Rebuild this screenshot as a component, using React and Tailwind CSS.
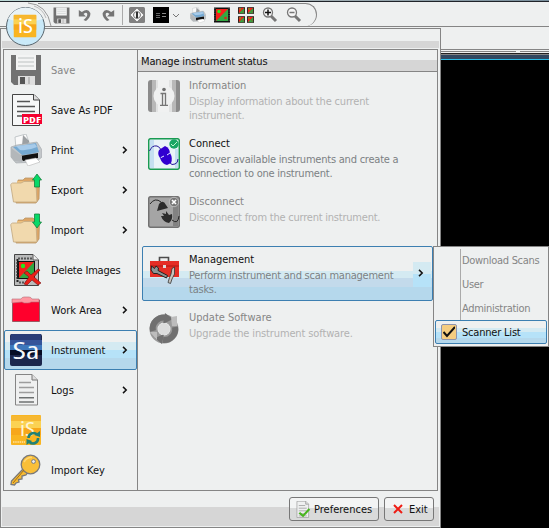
import React from "react";

const Svg = ({ size = 32, className = "", children }) => (
  <svg width={size} height={size} viewBox="0 0 32 32" className={"shrink-0 " + className} fill="none">{children}</svg>
);

const SaveIcon = ({ size, className }) => (
  <Svg size={size} className={className}>
    <path d="M1 1H31V31H4L1 28Z" fill="#727272" />
    <path d="M6 1H26V16H6Z" fill="#f3f4f4" />
    <path d="M8 4H24M8 8H24M8 12H24" stroke="#cfd2d2" strokeWidth="1.4" />
    <path d="M8 22H25V31H8Z" fill="#dedede" />
    <path d="M10 23H15V30H10Z" fill="#555" /><path d="M19 23V30" stroke="#bbb" strokeWidth="2" />
  </Svg>
);
const PdfIcon = () => (
  <Svg>
    <path d="M2.5 .5H24L29.5 6V31.5H2.5Z" fill="#f6f7f7" stroke="#444" />
    <path d="M23.5 .5V6H29.5" fill="#ddd" stroke="#444" />
    <path d="M7 7.5H20M7 12.5H25M7 17.5H25M7 22H12" stroke="#555" strokeWidth="1.5" />
    <path d="M12 20H32V30H12Z" fill="#f5002f" />
    <text x="13" y="28.5" fill="#fff" fontSize="9.6" fontWeight="bold" fontFamily="Open Sans, sans-serif" textLength="18" lengthAdjust="spacingAndGlyphs">PDF</text>
  </Svg>
);
const PrintIcon = ({ size, className }) => (
  <Svg size={size} className={className}>
    <path d="M5 3L16 0 20 11 6 15Z" fill="#fafafa" stroke="#aeb4b8" strokeWidth=".7" />
    <path d="M13 1L19 7 18 12 12 12Z" fill="#74797d" opacity=".7" />
    <path d="M1 13L7 11 27 8 32 16V23L26 28 6 29 1 23Z" fill="#c3c7ca" stroke="#9da2a6" strokeWidth=".6" />
    <path d="M3 13L26 9 29 18Q18 21 12 21Z" fill="#75a9d1" />
    <path d="M6 12L25 10 27 13Q18 17 10 16Z" fill="#a7cbea" />
    <path d="M10 22L28 19 28 24 13 27Z" fill="#111" />
    <path d="M15 26L26 24 30 28 18 32Z" fill="#fff" stroke="#aaa" strokeWidth=".5" />
    <path d="M1 14L12 22V28L4 27 1 23Z" fill="#b3b7ba" />
  </Svg>
);
const FolderIcon = ({ up }) => (
  <Svg className="overflow-visible">
    <path d="M8 9V6H13L15 4H23L25 6H29.5L29 25 26 29H6Z" fill="#dca566" stroke="#b99565" strokeWidth=".8" />
    <path d="M7 7H25V11H7Z" fill="#efc17d" />
    <path d="M.7 10.5Q2 8.5 4 9H11L14 7.5H24Q26 8 26 11L27 28H3.5Z" fill="#f1d9ad" stroke="#c6ad85" strokeWidth=".9" />
    <path d={up ? "M27 0L31.5 6H29.5V13H24.5V6H22.5Z" : "M24.5 0H29.5V8H31.5L27 14 22.5 8H24.5Z"} fill="#08d968" stroke="#16803c" strokeWidth=".8" />
  </Svg>
);
const Picture = () => (
  <>
    <path d="M0 1H32V31H0Z" fill="#111" />
    <path d="M4 4H28V28H4Z" fill="#f4201b" />
    <path d="M28 4V28H4Z" fill="#31a842" />
    <circle cx="10" cy="9" r="3.5" fill="#24e820" /><circle cx="23" cy="22" r="2.5" fill="#db221c" />
    <path d="M1.7 2V30M30.3 2V30" stroke="#aaa" strokeWidth="1.4" strokeDasharray="1.5 2" />
  </>
);
const PictureIcon = ({ size }) => <Svg size={size}><Picture /></Svg>;
const DeleteIcon = () => (
  <Svg>
    <path d="M4.5 .5H23L28.5 6V31.5H4.5Z" fill="#b9baba" stroke="#444" />
    <path d="M23 .5V6H28.5" fill="#eee" stroke="#555" />
    <path d="M7 7H25V25H7Z" fill="#111" /><path d="M9 8H24V24H9Z" fill="#f4201b" /><path d="M24 8V24H9Z" fill="#31a842" />
    <circle cx="13" cy="12" r="2.2" fill="#24e820" />
    <path d="M7.5 5V29" stroke="#222" strokeWidth="2" strokeDasharray="2 1" />
    <path d="M8 4.5H22M9 28.5H17" stroke="#555" strokeWidth="2" strokeDasharray="2 1" />
    <path d="M14 19L17 17 21 21 28 15 30 16 24 23 31 29 28 31 22 26 17 31 14 30 19 23Z" fill="#eb2019" stroke="#781313" strokeWidth=".6" />
  </Svg>
);
const WorkIcon = () => (
  <Svg>
    <path d="M2.5 6H29.5V27.5H2.5Z" fill="#ff002c" stroke="#9c5960" />
    <path d="M2 9V5H11Q12 3 14 3H19Q21 3 22 5H29V8H21Q20 9 18 9H14L12 8Z" fill="#ff98a1" stroke="#b66c75" strokeWidth=".6" />
  </Svg>
);
const InstrumentIcon = () => (
  <Svg>
    <rect width="32" height="32" rx="2" fill="#1c274d" /><path d="M1 0H31V6H0Z" fill="#293d78" />
    <path d="M0 6H32V11H0Z" fill="#35559a" /><path d="M0 11H32V16H0Z" fill="#3d78bc" /><path d="M0 16H32V21H0Z" fill="#060d25" />
    <text x="2.5" y="24.5" fill="#f6f8fb" fontSize="23" fontFamily="Open Sans, sans-serif" textLength="27" lengthAdjust="spacingAndGlyphs">Sa</text>
  </Svg>
);
const LogsIcon = ({ check, size }) => (
  <Svg size={size}>
    <path d="M5.5 .5H22L27.5 6V31H5.5Z" fill="#eff0f0" stroke="#858585" />
    <path d="M22 .5V6H27.5" fill="#ddd" stroke="#777" />
    <path d="M9 8.5H21M9 13.5H24M9 18.5H24M9 24H24M9 28H24" stroke="#9d9d9d" strokeWidth="1.5" />
    {!check && <path d="M9 23.5H24M9 28H24" stroke="#6c7070" />}
    {check && <path d="M10 22L17 28 29 15" stroke="#48b51f" strokeWidth="4" />}
  </Svg>
);
const GoldTile = () => (
  <>
    <rect x="1" y="1" width="30" height="30" rx="1" fill="#f9b521" />
    <path d="M1 2H31V7H1Z" fill="#f6b832" /><path d="M1 7H31V14H1Z" fill="#fbd253" /><path d="M1 14H31V21H1Z" fill="#f7a71b" />
  </>
);
const UpdateIcon = () => (
  <Svg>
    <GoldTile />
    <text x="10" y="22" fill="#fff5d3" fontSize="20" fontFamily="Open Sans, sans-serif" textLength="15" lengthAdjust="spacingAndGlyphs">iS</text>
    <path d="M3 28H15" stroke="#ffe19a" strokeWidth="1.5" strokeDasharray="1.5 .7" />
    <path d="M18.5 24A5 5 0 0 1 27 20.5M28 24A5 5 0 0 1 19.5 28" stroke="#218275" strokeWidth="2.6" />
    <path d="M24.5 21L30 17V23ZM22 27L16.5 31V25Z" fill="#218275" />
  </Svg>
);
const KeyIcon = () => (
  <Svg>
    <path d="M13 15L1.5 27 1 30.5 4.5 31 6 29 9 28 8.5 25.5 12 25 12 22 16 21 18 18Z" fill="#f7bb32" stroke="#797979" strokeWidth="1.3" />
    <circle cx="20.5" cy="10.5" r="9.3" fill="#f9bf38" stroke="#797979" strokeWidth="1.3" />
    <path d="M14 16L3 29" stroke="#a56e13" /><path d="M14 8Q17 3 22 3.5" stroke="#ffd675" strokeWidth="1.5" />
    <circle cx="23.5" cy="7.5" r="1.9" fill="#eee" stroke="#797979" />
  </Svg>
);
const InfoIcon = () => (
  <Svg>
    <rect width="32" height="32" rx="3" fill="#8b8b8b" />
    <path d="M4 0H28V32H4Z" fill="#b8b8b8" /><path d="M8 0H24V32H8Z" fill="#e1e2e2" /><path d="M10 0H21V32H10Z" fill="#f0f1f1" />
    <circle cx="16" cy="16" r="10.5" fill="#eff0f0" />
    <circle cx="16" cy="9.5" r="1.8" fill="#707070" /><path d="M12.5 13.5H17.5V25M14.5 14V25M12 25.3H20" stroke="#757575" strokeWidth="1.3" />
  </Svg>
);
const ConnectIcon = () => (
  <Svg>
    <rect x=".7" y=".7" width="30.6" height="30.6" rx="2" fill="#e9f3f8" stroke="#199b52" strokeWidth="1.5" />
    <path d="M2 2H6V30H2ZM27 11H30V30H27Z" fill="#c4dff1" />
    <path d="M1.5 13Q4 7 9 8Q12 9 13 12M21 24Q24 28 27 26Q30 25 30 21" stroke="#24179a" strokeWidth="1" />
    <path d="M11 12L17 8Q22 10 22 16L12 20Q9 16 11 12Z" fill="#3100d0" />
    <path d="M12 20L22 15Q25 20 23 25L19 27Q14 26 12 20Z" fill="#3100d0" /><path d="M13 19.5L16 18M19 17L22 15" stroke="#e5edff" />
    <circle cx="26" cy="6" r="4.7" fill="#18a665" /><path d="M23 6L25 8 29 4" stroke="#bdf5ce" />
  </Svg>
);
const DisconnectIcon = () => (
  <Svg>
    <rect x=".7" y=".7" width="30.6" height="30.6" rx="2" fill="#a5a5a5" stroke="#727272" strokeWidth="1.5" />
    <path d="M25 2H30V30H25Z" fill="#828282" /><path d="M2 8Q7 1 13 6M24 24Q30 29 31 20" stroke="#282828" />
    <path d="M9 15L11 8Q15 3 18 9L20 12Z" fill="#2c2c2c" />
    <path d="M13 20L16 20 14 17 18 18 18 15 21 19 24 18Q25 24 21 27Q15 26 13 20Z" fill="#2c2c2c" />
    <circle cx="26" cy="6" r="4.7" fill="#777" stroke="#ddd" strokeWidth=".6" /><path d="M24 4L28 8M28 4L24 8" stroke="#fff" strokeWidth="1.6" />
  </Svg>
);
const ToolboxIcon = () => (
  <Svg>
    <path d="M11.5 7V3.5H20.5V7" stroke="#4b4b4b" strokeWidth="1.6" />
    <path d="M2 7H31V23H2Z" fill="#e52d25" /><path d="M2 12H31" stroke="#ae1913" /><path d="M15 11H18V14H15Z" fill="#ddd" />
    <path d="M3.5 12L6.5 14.5 8 12 10.5 14 10 16.5 19.5 21.5 18.5 24 9 19.5 5.5 19.5 3 16Z" fill="#8c9494" stroke="#222" />
    <path d="M24 14.5L26.5 13V20L24 25 22.5 29.5 20 28.5 21.5 23.5 23 20Z" fill="#c8c4bd" stroke="#333" strokeWidth=".8" />
  </Svg>
);
const RefreshIcon = () => (
  <Svg>
    <circle cx="16" cy="17" r="10.5" stroke="#9a9a9a" strokeWidth="8" />
    <path d="M5 19A11 11 0 0 1 19 6M27 15A11 11 0 0 1 15 28" stroke="#707070" strokeWidth="6" />
    <path d="M17 1L25 7 15 12ZM14 32L7 26 16 22Z" fill="#707070" />
    <path d="M23 5L29 4V14L24 14ZM2 20L9 20 9 28Z" fill="#bdbdbd" />
    <circle cx="16" cy="17" r="6" fill="#dcdddd" />
  </Svg>
);
const Arrow = ({ className = "" }) => (
  <svg width="6" height="8" viewBox="0 0 6 8" className={className}><path d="M1 .9L4.2 4 1 7.1" fill="none" stroke="#111" strokeWidth="1.5" /></svg>
);
const Undo = ({ redo }) => (
  <svg width="13" height="14" viewBox="0 0 12 14" className={redo ? "-scale-x-100" : ""}>
    <path d="M.3 2V8.5H7.5L5 6Q8 3.5 8.8 6Q9 9 5 12L7.5 13Q12.5 9 11.8 5Q9.5 -.5 3.3 4Z" fill="#757575" />
  </svg>
);
const Zoom = ({ plus }) => (
  <svg width="16" height="16" viewBox="0 0 16 16" fill="none">
    <circle cx="6" cy="5.5" r="4.5" stroke="#777" strokeWidth="1.3" fill="#f6f6f6" /><path d="M9 9L14 14" stroke="#777" strokeWidth="3" />
    <path d={plus ? "M3 5.5H9M6 2.5V8.5" : "M3.5 5.5H8.5"} stroke={plus ? "#111" : "#777"} strokeWidth="1.5" />
  </svg>
);

const items = [
  ["Save", SaveIcon, false, "text-[#858585]"], ["Save As PDF", PdfIcon, false, ""], ["Print", PrintIcon, true, ""],
  ["Export", () => <FolderIcon up />, true, ""], ["Import", () => <FolderIcon />, true, ""],
  ["Delete Images", DeleteIcon, false, "tracking-[-0.18px]"], ["Work Area", WorkIcon, true, ""],
  ["Instrument", InstrumentIcon, true, ""], ["Logs", LogsIcon, true, ""],
  ["Update", UpdateIcon, false, ""], ["Import Key", KeyIcon, false, ""],
];
const actions = [
  ["Information", ["Display information about the current", "instrument."], InfoIcon, true, "tracking-[-0.18px]"],
  ["Connect", ["Discover available instruments and create a", "connection to one instrument."], ConnectIcon, false, "tracking-[-0.22px]"],
  ["Disconnect", ["Disconnect from the current instrument."], DisconnectIcon, true, "tracking-[-0.22px]"],
  ["Management", ["Perform instrument and scan management", "tasks."], ToolboxIcon, false, "tracking-[-0.24px]"],
  ["Update Software", ["Upgrade the instrument software."], RefreshIcon, true, "tracking-[-0.13px]"],
];

function Toolbar() {
  return (
    <header className="h-[27px] border-b border-[#858585]">
      <div className="h-[2px] border-b border-[#20242a] bg-gradient-to-r from-[#bcd9d6] via-[#a9b5b8] to-[#788e9c]" />
      <div className="ml-[38px] mt-px flex h-[23px] w-[279px] items-center rounded-r-[12px] border-r border-t border-[#858585] pl-[15px]">
        <SaveIcon size={17} />
        <div className="ml-[8px] flex"><Undo /></div>
        <div className="ml-[11px] flex"><Undo redo /></div>
        <div className="ml-[7px] h-[20px] w-px bg-[#aaa]" />
        <Svg size={16} className="ml-[6px]"><rect width="32" height="32" rx="3" fill="#808080" /><path d="M16 2L30 16 16 30 2 16Z" fill="#f4f4f4" stroke="#555" /><circle cx="16" cy="16" r="7" stroke="#777" strokeWidth="2" /><path d="M16 10V22" stroke="#333" strokeWidth="4" /></Svg>
        <div className="ml-[8px] flex h-[16px] w-[16px] items-center gap-[2px] bg-black px-[3px]">
          <div className="flex w-[5px] flex-col gap-px"><i className="h-px bg-[#666]" /><i className="h-px bg-[#666]" /><i className="h-px bg-[#666]" /></div>
          <div className="flex w-[4px] flex-col gap-[2px]"><i className="h-px bg-[#888]" /><i className="h-px bg-[#888]" /></div>
        </div>
        <svg width="8" height="5" className="ml-[3px]"><path d="M1 1L4 4 7 1" fill="none" stroke="#777" /></svg>
        <PrintIcon size={16} className="ml-[10px]" />
        <div className="ml-[8px] flex"><PictureIcon size={16} /></div>
        <div className="ml-[8px] grid grid-cols-2 gap-[2px]">{[0, 1, 2, 3].map((n) => <PictureIcon key={n} size={7} />)}</div>
        <div className="ml-[8px] flex"><Zoom plus /></div>
        <div className="ml-[8px] flex"><Zoom /></div>
      </div>
    </header>
  );
}

function Submenu() {
  return (
    <div className="absolute left-[433px] top-[246px] flex h-[101px] w-[116px] flex-col border border-[#858585] bg-[#eef0f0] p-px pt-[2px]">
      <div className="ml-[25px] h-[71px] border-l border-[#aaa] tracking-[-0.3px] text-[#858585]">
        <div className="flex flex-col">
          {["Download Scans", "User", "Administration"].map((x) => <div key={x} className="flex h-[24px] items-center whitespace-nowrap pl-px">{x}</div>)}
        </div>
      </div>
      <div className="flex h-[24px] items-center rounded-[2px] border border-[#3c7fb1] bg-[linear-gradient(#eef0f0_7px,#d4eaf2_7px,#d4eaf2_11px,#b6e2f8_11px,#b6e2f8_17px,#b5d8ec_17px)] pl-[5px]">
        <div className="flex h-[16px] w-[16px] items-center justify-center rounded-[2px] border border-[#8e94ad] bg-[#f5cd80]">
          <svg width="12" height="12" viewBox="0 0 12 12"><path d="M.5 6L4 10 12 1" fill="none" stroke="#111" strokeWidth="2" /></svg>
        </div>
        <span className="ml-[5px] whitespace-nowrap pt-px tracking-[-0.2px]">Scanner List</span>
      </div>
    </div>
  );
}

export default function App() {
  return (
    <div className="relative h-[528px] w-[549px] overflow-hidden bg-[#eef0f0] text-[11px] leading-[14px] text-[#111] [font-family:'DejaVu_Sans_Condensed','DejaVu_Sans',sans-serif] [font-stretch:condensed]">
      <Toolbar />
      <div className="ml-[441px] flex h-[501px] flex-col bg-black">
        <div className="h-[23px] border-b border-[#858585] bg-[#eef0f0]" />
        <div className="flex h-[2px] items-end bg-[#eef0f0]"><div className="h-px w-[75px] bg-[#858585]" /><div className="ml-[4px] h-px flex-1 bg-[#858585]" /></div>
        <div className="h-[2px] border-b border-[#222] bg-[#eef0f0]" />
        <div className="h-px bg-[#858585]" />
        <div className="h-[4px] bg-[#304760]" /><div className="h-px bg-[#29bee8]" />
      </div>

      <div className="absolute left-0 top-[28px] flex h-[500px] w-[441px] flex-col border border-[#858585] bg-[#eef0f0] px-px pb-px">
        <div className="h-[20px] bg-[linear-gradient(#eef0f0_12px,#d6d6d6_12px,#d6d6d6_19px,#eef0f0_19px)]" />
        <div className="mx-px flex h-[442px] border border-[#858585]">
          <nav className="flex w-[134px] flex-col border-r border-[#858585]">
            {items.map(([label, Icon, arrow, tone]) => (
              <div key={label} className={"flex h-[40px] items-center rounded-[2px] border pl-[5px] pr-[6px] " + (label === "Instrument" ? "border-[#3c7fb1] bg-[linear-gradient(#eef0f0_11px,#d4eaf2_11px,#d4eaf2_19px,#b6e2f8_19px,#b6e2f8_27px,#b5d8ec_27px)]" : "border-transparent")}>
                <Icon />
                <span className={"ml-[9px] flex-1 whitespace-nowrap pt-[2px] " + tone}>{label}</span>
                {arrow && <Arrow className="mr-[2px]" />}
              </div>
            ))}
          </nav>
          <main className="flex flex-1 flex-col">
            <h1 className="h-[22px] border-b border-[#858585] bg-[linear-gradient(#eef0f0_10px,#d6d6d6_10px)] pl-[3px] pt-[5px] tracking-[-0.16px]">Manage instrument status</h1>
            <div className="flex flex-col gap-[3px] px-[4px]">
              {actions.map(([title, lines, Icon, disabled, track]) => (
                <div key={title} className={"flex h-[55px] rounded-[2px] border pl-[5px] " + (title === "Management" ? "border-[#3c7fb1] bg-[linear-gradient(#eef0f0_24px,#d4eaf2_24px,#d4eaf2_31px,#c3daeb_31px,#c3daeb_40px,#b5d8ec_40px)]" : "border-transparent")}>
                  <div className="pt-[7px]"><Icon /></div>
                  <div className="ml-[9px] flex-1 whitespace-nowrap pt-[6px]">
                    <div className={"mb-[2px] " + (disabled ? "text-[#858585]" : "")}>{title}</div>
                    {lines.map((l) => <div key={l} className={track + (disabled ? " text-[#b2b2b2]" : " text-[#7c8184]")}>{l}</div>)}
                  </div>
                  {title === "Management" && <div className="mt-[15px] mr-px flex h-[25px] w-[18px] items-center justify-center bg-[linear-gradient(#d4eaf2_12px,#b6e2f8_12px)] pb-[3px] pr-[3px]"><Arrow /></div>}
                </div>
              ))}
            </div>
          </main>
        </div>
        <footer className="flex flex-1 justify-end gap-[5px] bg-[linear-gradient(#eef0f0_16px,#d6d6d6_16px)] pr-[5px] pt-[6px]">
          <button className="flex h-[24px] w-[90px] items-center rounded-[3px] border border-[#777] bg-[linear-gradient(#f3f4f4_10px,#d9dada_10px)] pl-[4px]"><LogsIcon check size={17} /><span className="ml-[3px] pt-px">Preferences</span></button>
          <button className="flex h-[24px] w-[50px] items-center rounded-[3px] border border-[#777] bg-[linear-gradient(#f3f4f4_10px,#d9dada_10px)] pl-[8px]"><svg width="10" height="10"><path d="M1 1L9 9M9 1L1 9" stroke="#ee1c14" strokeWidth="2" /></svg><span className="ml-[6px] pt-px">Exit</span></button>
        </footer>
      </div>

      <svg className="absolute left-0 top-0" width="54" height="50" viewBox="0 0 54 50" fill="none">
        <path d="M28 3Q47 4 51 26" stroke="#999" /><path d="M34 6Q43 9 46 18" stroke="#bbb" />
        <circle cx="25.5" cy="26.5" r="19" fill="#c9e9f8" stroke="#58656d" />
        <path d="M8 19A19 19 0 0 1 43 19Q25 25 8 19Z" fill="#e9f3f7" />
        <svg x="13" y="14" width="24" height="24" viewBox="0 0 32 32"><GoldTile /></svg>
        <text x="18" y="33" fill="#fff" fontSize="20" fontFamily="Open Sans, sans-serif" textLength="15" lengthAdjust="spacingAndGlyphs">iS</text>
      </svg>
      <Submenu />
    </div>
  );
}
